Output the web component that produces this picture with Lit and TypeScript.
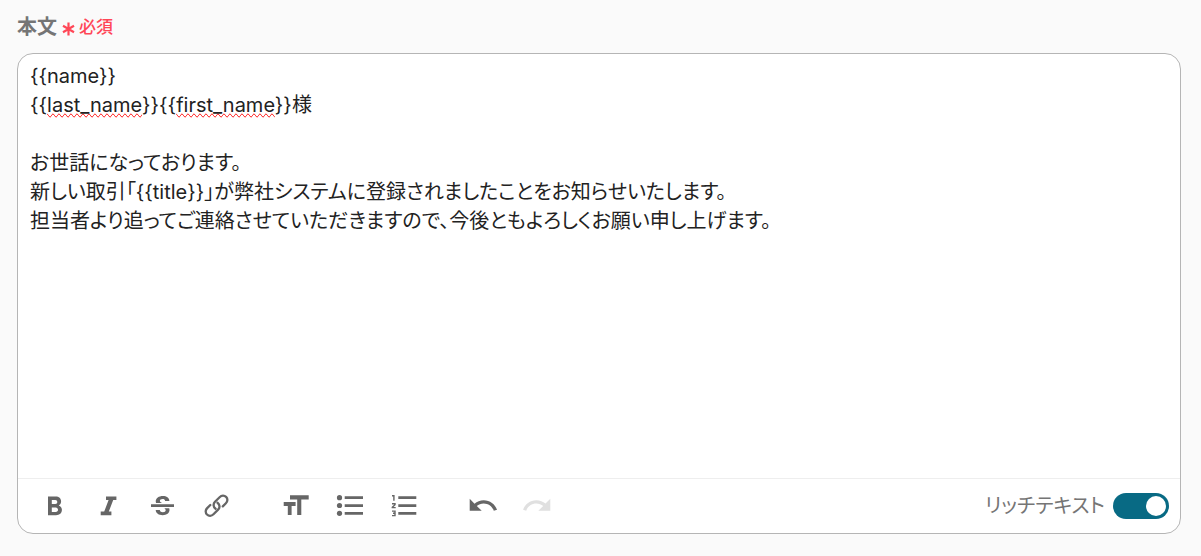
import { LitElement, html, css, svg } from "lit";
import { customElement, state } from "lit/decorators.js";

type Tool = { name: string; label: string; disabled?: boolean };

const groups: Tool[][] = [
  [
    { name: "bold", label: "太字" },
    { name: "italic", label: "斜体" },
    { name: "strike", label: "取り消し線" },
    { name: "link", label: "リンク" },
  ],
  [
    { name: "size", label: "文字サイズ" },
    { name: "bullets", label: "箇条書き" },
    { name: "numbers", label: "番号付きリスト" },
  ],
  [
    { name: "undo", label: "元に戻す" },
    { name: "redo", label: "やり直す", disabled: true },
  ],
];

/* All icons share a 32 unit grid. */
const icons: Record<string, unknown> = {
  bold: svg`<path fill-rule="evenodd" d="M9 6.500h7.700c3.300 0 5.400 2 5.400 4.900 0 1.900-1 3.300-2.300 4 2 .7 3.100 2.300 3.100 4.400 0 3.300-2.300 5.400-5.900 5.400H9zM12.800 10v4.100h3.500c1.300 0 2-.8 2-2s-.8-2.100-2-2.100zM12.800 17.400v4.500h3.900c1.500 0 2.300-.9 2.300-2.200s-.9-2.300-2.300-2.300z"/>`,
  italic: svg`<path d="M13 6.500h10.400v3.600h-3.200l-4.400 11.500h2.600v3.600H7.700v-3.600h3.500l4.400-11.500H13z"/>`,
  strike: svg`<path d="M4 14.200h23v2.900H4zM9.100 13.100c-1.500-4 1.900-7.200 6.800-7.200 3.700 0 6.300 1.800 6.500 5h-4.300c-.2-1.400-1-2-2.500-2-1.700 0-2.700.7-2.700 1.800 0 1 .7 1.700 2.200 2.400zM22.200 18.300c1.300 4-1.700 6.900-6.500 6.900-4 0-6.800-1.900-7-5.200h4.100c.3 1.500 1.300 2.200 3.100 2.200 1.700 0 2.800-.7 2.800-1.900 0-.8-.5-1.500-1.400-2z"/>`,
  link: svg`<g fill="none" stroke="currentColor" stroke-width="2.300" stroke-linecap="round"><path d="M14.600 18.700c-2.500-1.800-2.600-4.900-.6-6.900l4.600-4.600c2-2 4.700-2 6.500-.3 1.800 1.800 1.700 4.500-.2 6.400l-3.100 3.100"/><path d="M16.500 12.700c2.500 1.800 2.600 4.900.6 6.900L12.500 24.200c-2 2-4.700 2-6.500.3-1.800-1.800-1.700-4.500.2-6.400l3.100-3.100"/></g>`,
  size: svg`<path d="M10 5.300h18.700v4.100h-7.400v15.700h-4.100V9.400H10zM3.700 11.900h11.900V16h-4v9.100H7.800V16H3.700z"/>`,
  bullets: svg`<circle cx="5.500" cy="7.700" r="2.600"/><circle cx="5.500" cy="15.500" r="2.600"/><circle cx="5.500" cy="23.300" r="2.600"/><path d="M10.700 6.300h18.300v2.700H10.700zM10.700 14.200h18.300v2.700H10.700zM10.700 22h18.300v2.700H10.700z"/>`,
  numbers: svg`<path d="M10.300 6.300h18v2.700h-18zM10.300 14.200h18v2.700h-18zM10.300 22h18v2.700h-18z"/><path fill="none" stroke="currentColor" stroke-width="1.400" d="M4 5.700h1.900v5M4 13.700h3v1L4.300 17.200v.4h3.400M4 21.100h3v4.500H4M5 23.300h2"/>`,
  undo: svg`<path d="M16.700 10.200c-3.500 0-6.700 1.300-9.200 3.500L2.700 8.800v12h12l-4.900-4.900c1.900-1.500 4.200-2.500 6.900-2.500 4.700 0 8.700 3.100 10.100 7.300l3.200-1C28.100 14.200 22.900 10.200 16.700 10.200z"/>`,
  redo: svg`<path d="M24.500 13.600C22.100 11.500 18.900 10.200 15.300 10.200 9.100 10.200 3.900 14.200 2.100 19.800l3.100 1c1.400-4.300 5.400-7.300 10.100-7.300 2.600 0 5 1 6.900 2.500l-4.900 4.800h12v-12z"/>`,
};

@customElement("app-root")
export class AppRoot extends LitElement {
  @state() private rich = true;

  static styles = css`
    :host {
      display: block;
      box-sizing: border-box;
      min-height: 100vh;
      padding: 13px 20px 22px 17px;
      background: #fafafa;
      color: #222;
      font-family: Inter, "Noto Sans CJK JP", sans-serif;
      font-size: 20px;
      line-height: 29px;
      font-feature-settings: "palt";
    }
    .heading {
      display: flex;
      align-items: center;
      gap: 5px;
      margin-bottom: 11px;
    }
    .title {
      color: #757575;
      font-weight: 700;
    }
    .required {
      display: flex;
      align-items: center;
      gap: 4px;
      color: #ff4757;
      font-size: 17px;
      font-weight: 500;
    }
    .star {
      width: 13px;
      height: 14px;
      padding-top: 2px;
    }
    .editor {
      border: 1px solid #b5b5b5;
      border-radius: 16px;
      background: #fff;
    }
    .body {
      min-height: 408px;
      padding: 8px 12px;
      outline: none;
    }
    .body p {
      margin: 0;
    }
    .misspelt {
      text-decoration-line: spelling-error;
    }
    .bar {
      display: flex;
      align-items: center;
      justify-content: space-between;
      padding: 0 11px;
      height: 54px;
      border-top: 1px solid #eee;
    }
    .tools,
    .group {
      display: flex;
    }
    .tools {
      gap: 47px;
      padding-left: 10px;
    }
    .group {
      gap: 22px;
    }
    .tool {
      width: 32px;
      height: 32px;
      padding: 0;
      border: 0;
      background: none;
      color: #666;
      cursor: pointer;
    }
    .tool:disabled {
      color: #e0e0e0;
      cursor: default;
    }
    .icon {
      display: block;
      fill: currentColor;
    }
    .mode {
      display: flex;
      align-items: center;
      gap: 8px;
      color: #757575;
    }
    .switch {
      appearance: none;
      display: flex;
      box-sizing: border-box;
      width: 56px;
      height: 26px;
      margin: 0;
      padding: 3px;
      border-radius: 13px;
      background: #bbb;
      cursor: pointer;
    }
    .switch::before {
      content: "";
      width: 20px;
      height: 20px;
      border-radius: 50%;
      background: #fff;
    }
    .switch:checked {
      justify-content: flex-end;
      background: #086a84;
    }
  `;

  render() {
    return html`
      <div class="heading">
        <span class="title" id="title">本文</span>
        <span class="required">
          <svg class="star" viewBox="0 0 13 14" aria-hidden="true">
            <path d="M6.500 .5v13M1 3.800l11 6.400M12 3.800L1 10.200" fill="none" stroke="currentColor" stroke-width="2.200" />
          </svg>
          必須
        </span>
      </div>
      <div class="editor">
        <div class="body" role="textbox" aria-multiline="true" aria-labelledby="title" contenteditable="true" spellcheck="false">
          <p>{{name}}</p>
          <p>{{<span class="misspelt">last_name</span>}}{{<span class="misspelt">first_name</span>}}様</p>
          <p><br /></p>
          <p>お世話になっております。</p>
          <p>新しい取引「{{title}}」が弊社システムに登録されましたことをお知らせいたします。</p>
          <p>担当者より追ってご連絡させていただきますので、今後ともよろしくお願い申し上げます。</p>
        </div>
        <div class="bar">
          <div class="tools" role="toolbar" aria-label="書式">
            ${groups.map(
              (group) => html`<div class="group">
                ${group.map(
                  (tool) => html`<button class="tool" type="button" aria-label=${tool.label} ?disabled=${tool.disabled}>
                    <svg class="icon" width="32" height="32" viewBox="0 0 32 32" aria-hidden="true">${icons[tool.name]}</svg>
                  </button>`,
                )}
              </div>`,
            )}
          </div>
          <label class="mode">
            リッチテキスト
            <input
              class="switch"
              type="checkbox"
              role="switch"
              .checked=${this.rich}
              @change=${(e: Event) => (this.rich = (e.target as HTMLInputElement).checked)}
            />
          </label>
        </div>
      </div>
    `;
  }
}
